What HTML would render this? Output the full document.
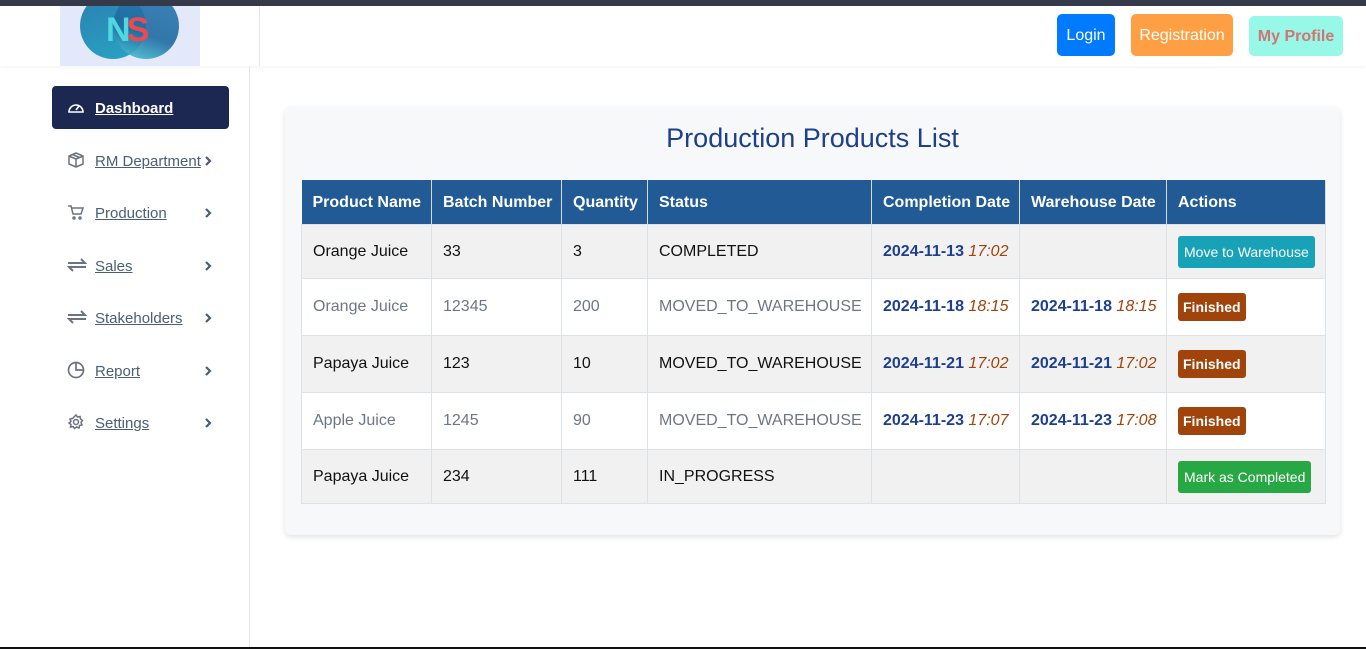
<!DOCTYPE html>
<html><head><meta charset="utf-8"><style>
*{box-sizing:border-box;margin:0;padding:0}
body{width:1366px;height:649px;overflow:hidden;background:#fff;font-family:"Liberation Sans",sans-serif;position:relative}
.top{position:absolute;left:0;top:0;width:1366px;height:6px;background:#343a4a}
.hdr{position:absolute;left:0;top:6px;width:1366px;height:60px;background:#fff;box-shadow:0 2px 4px rgba(0,0,0,.04)}
.vl{position:absolute;left:259px;top:6px;width:1px;height:60px;background:#e5e7eb}
.vl2{position:absolute;left:249px;top:66px;width:1px;height:583px;background:#e5e7eb}
.logo{position:absolute;left:60px;top:6px;width:140px;height:60px;background:#e3e9fb;overflow:hidden}
.c1{position:absolute;left:20px;top:-13px;width:66px;height:66px;border-radius:50%;background:linear-gradient(160deg,#2a7fb0,#2aa4c4)}
.c2{position:absolute;left:53px;top:-13px;width:66px;height:66px;border-radius:50%;background:linear-gradient(200deg,#2a78b0,#1e6aa0 60%,#4fd0d8);opacity:.9}
.ns{position:absolute;left:46px;top:5px;font:bold 34px "Liberation Sans",sans-serif;letter-spacing:-4px}
.btn{position:absolute;top:14px;height:42px;border-radius:5px;color:#fff;font-size:16px;line-height:44px;text-align:center;font-family:"Liberation Sans",sans-serif;white-space:nowrap}
.side a{position:absolute;left:52px;width:177px;height:43px;color:#4b5e75;font-size:15px;font-family:"Liberation Sans",sans-serif}
.side a svg{position:absolute;left:15px;top:12px}
.side a span.t{position:absolute;left:43px;top:14px;text-decoration:underline;white-space:nowrap}
.side a svg.ch{left:152px;top:16px}
.card{position:absolute;left:285px;top:107px;width:1055px;height:428px;background:#f7f8fa;border-radius:6px;box-shadow:0 2px 6px rgba(0,0,0,.12)}
h1{position:absolute;left:285px;width:1055px;top:123px;text-align:center;font-weight:normal;font-size:27px;color:#1e3f8f}
table{position:absolute;left:301px;top:180px;width:1024px;table-layout:fixed;border-collapse:collapse;font-size:16px;white-space:nowrap}
th{background:#215a94;color:#fff;text-align:left;height:44px;padding:2px 11px 0;font-weight:bold;border-right:1px solid #d5dae3}
td{padding:1px 11px 0;border:1px solid #dde1e8;color:#111;overflow:visible}
tr.g td{background:#f1f1f1}
tr.w td{background:#fff;color:#6c7785}
.d{color:#1e3f8f;font-weight:bold}.tm{color:#a0440c;font-style:italic;font-weight:normal}
.b{display:inline-block;color:#fff;border-radius:3px;font-size:14px}
</style></head><body>
<div class="top"></div><div class="hdr"></div><div class="vl"></div><div class="vl2"></div>
<div class="logo"><div class="c1"></div><div class="c2"></div><div class="ns"><span style="color:#4fd8e0">N</span><span style="color:#f0484e">S</span></div></div>
<div class="btn" style="left:1057px;width:58px;background:#007bff">Login</div>
<div class="btn" style="left:1131px;width:102px;background:#ff9f43">Registration</div>
<div class="btn" style="left:1249px;width:94px;top:16px;height:40px;line-height:42px;background:#98f8e8;color:#d27474;font-weight:bold">My Profile</div>
<div class="side">
<a style="top:86px;background:#1c2852;color:#fff;border-radius:4px;font-weight:bold"><svg width="18" height="18" viewBox="0 0 18 18" fill="none" stroke="#fff" stroke-width="1.6"><path d="M2 14a7 7 0 1 1 14 0z"/><path d="M9 12l3-4"/></svg><span class="t">Dashboard</span></a>
<a style="top:139px"><svg width="18" height="18" viewBox="0 0 18 18" fill="none" stroke="#6b7280" stroke-width="1.5"><path d="M9 2l7 3v8l-7 3-7-3V5z M2 5l7 3 7-3 M9 8v8 M5.5 3.5l7 3"/></svg><span class="t">RM Department</span><svg class="ch" width="8" height="12" viewBox="0 0 8 12" style="left:152px"><path d="M2 2l4 4-4 4" fill="none" stroke="#4b5e75" stroke-width="2.2"/></svg></a>
<a style="top:191px"><svg width="18" height="18" viewBox="0 0 18 18" fill="none" stroke="#6b7280" stroke-width="1.5"><path d="M1 3h3l2 8h8l2-6H5"/><circle cx="7" cy="15" r="1"/><circle cx="13" cy="15" r="1"/></svg><span class="t">Production</span><svg class="ch" width="8" height="12" viewBox="0 0 8 12"><path d="M2 2l4 4-4 4" fill="none" stroke="#4b5e75" stroke-width="2.2"/></svg></a>
<a style="top:244px"><svg width="20" height="18" viewBox="0 0 20 18" fill="none" stroke="#6b7280" stroke-width="2"><path d="M1 7h17l-4-4 M19 11H2l4 4"/></svg><span class="t">Sales</span><svg class="ch" width="8" height="12" viewBox="0 0 8 12"><path d="M2 2l4 4-4 4" fill="none" stroke="#4b5e75" stroke-width="2.2"/></svg></a>
<a style="top:296px"><svg width="20" height="18" viewBox="0 0 20 18" fill="none" stroke="#6b7280" stroke-width="2"><path d="M1 7h17l-4-4 M19 11H2l4 4"/></svg><span class="t">Stakeholders</span><svg class="ch" width="8" height="12" viewBox="0 0 8 12"><path d="M2 2l4 4-4 4" fill="none" stroke="#4b5e75" stroke-width="2.2"/></svg></a>
<a style="top:349px"><svg width="18" height="18" viewBox="0 0 18 18" fill="none" stroke="#6b7280" stroke-width="1.7"><circle cx="9" cy="9" r="7.5"/><path d="M9 1.5V9h7.5"/></svg><span class="t">Report</span><svg class="ch" width="8" height="12" viewBox="0 0 8 12"><path d="M2 2l4 4-4 4" fill="none" stroke="#4b5e75" stroke-width="2.2"/></svg></a>
<a style="top:401px"><svg width="18" height="18" viewBox="0 0 18 18" fill="none" stroke="#6b7280" stroke-width="1.5"><circle cx="9" cy="9" r="2.5"/><path d="M9 2l1.5 2 2.5-.5.5 2.5 2 1.5-1.5 2 1 2.5-2.5.5-.5 2.5-2.5-1-2 1.5-1.5-2-2.5.5.5-2.5-2-1.5 2-1.5-1-2.5 2.5-.5z"/></svg><span class="t">Settings</span><svg class="ch" width="8" height="12" viewBox="0 0 8 12"><path d="M2 2l4 4-4 4" fill="none" stroke="#4b5e75" stroke-width="2.2"/></svg></a>
</div>
<div class="card"></div>
<h1>Production Products List</h1>
<table>
<colgroup><col style="width:130px"><col style="width:130px"><col style="width:86px"><col style="width:224px"><col style="width:148px"><col style="width:147px"><col style="width:159px"></colgroup>
<tr><th>Product Name</th><th>Batch Number</th><th>Quantity</th><th>Status</th><th>Completion Date</th><th>Warehouse Date</th><th>Actions</th></tr>
<tr class="g" style="height:54px"><td>Orange Juice</td><td>33</td><td>3</td><td>COMPLETED</td><td><span class="d">2024-11-13</span> <span class="tm">17:02</span></td><td></td><td><span class="b" style="background:#17a2b8;padding:8px 6px">Move to Warehouse</span></td></tr>
<tr class="w" style="height:57px"><td>Orange Juice</td><td>12345</td><td>200</td><td>MOVED_TO_WAREHOUSE</td><td><span class="d">2024-11-18</span> <span class="tm">18:15</span></td><td><span class="d">2024-11-18</span> <span class="tm">18:15</span></td><td><span class="b" style="background:#a0440c;padding:6px 5px;font-weight:bold;color:#fff">Finished</span></td></tr>
<tr class="g" style="height:57px"><td>Papaya Juice</td><td>123</td><td>10</td><td>MOVED_TO_WAREHOUSE</td><td><span class="d">2024-11-21</span> <span class="tm">17:02</span></td><td><span class="d">2024-11-21</span> <span class="tm">17:02</span></td><td><span class="b" style="background:#a0440c;padding:6px 5px;font-weight:bold">Finished</span></td></tr>
<tr class="w" style="height:57px"><td>Apple Juice</td><td>1245</td><td>90</td><td>MOVED_TO_WAREHOUSE</td><td><span class="d">2024-11-23</span> <span class="tm">17:07</span></td><td><span class="d">2024-11-23</span> <span class="tm">17:08</span></td><td><span class="b" style="background:#a0440c;padding:6px 5px;font-weight:bold;color:#fff">Finished</span></td></tr>
<tr class="g" style="height:54px"><td>Papaya Juice</td><td>234</td><td>111</td><td>IN_PROGRESS</td><td></td><td></td><td><span class="b" style="background:#28a745;padding:8px 6px">Mark as Completed</span></td></tr>
</table>
<div style="position:absolute;left:0;top:647px;width:1366px;height:2px;background:#111"></div>
</body></html>
